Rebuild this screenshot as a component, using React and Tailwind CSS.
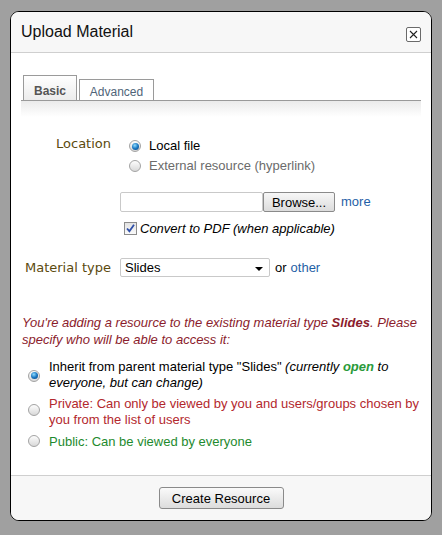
import React from 'react';

const SANS = { fontFamily: '"Liberation Sans", Arial, sans-serif' };
const LABEL = { fontFamily: '"DejaVu Sans", Verdana, sans-serif' };

function Radio({ checked }) {
  return (
    <span className="relative inline-flex w-[12px] h-[12px] shrink-0 items-center justify-center rounded-full border border-[#a3a3a3] bg-gradient-to-b from-[#fdfdfd] to-[#d9d9d9]">
      {checked && (
        <span className="w-[7px] h-[7px] rounded-full bg-[radial-gradient(circle_at_40%_35%,#8fdcff,#1a78c2_50%,#0b3f78)]" />
      )}
    </span>
  );
}

function Checkbox() {
  return (
    <span className="inline-flex w-[13px] h-[13px] shrink-0 items-center justify-center border border-[#8c8c8c] bg-gradient-to-b from-[#e2e2e2] to-[#fafafa]">
      <svg width="9" height="9" viewBox="0 0 9 9">
        <path d="M1 4.5 L3.4 7.2 L8 0.8" fill="none" stroke="#2f4fa8" strokeWidth="1.8" />
      </svg>
    </span>
  );
}

export default function App() {
  return (
    <div className="w-[442px] h-[535px] bg-[#a0a0a0] pt-[11px] pl-[10px]" style={SANS}>
      <div className="w-[422px] h-[510px] border border-black rounded-[9px] overflow-hidden bg-white flex flex-col text-[13px] text-black">
        {/* header */}
        <div className="h-[41px] shrink-0 bg-[#f7f7f7] border-b border-[#cfcfcf] flex items-center justify-between pl-[10px] pr-[10px]">
          <span className="text-[16px] text-[#111] leading-none">Upload Material</span>
          <span className="mt-[4px] w-[15px] h-[15px] border border-[#6a6a6a] rounded-[2px] bg-white flex items-center justify-center">
            <svg width="9" height="9" viewBox="0 0 9 9">
              <path d="M1 1 L8 8 M8 1 L1 8" stroke="#222" strokeWidth="1.1" />
            </svg>
          </span>
        </div>

        {/* body */}
        <div className="flex-1 px-[10px]">
          <div className="mt-[23px] h-[25px] flex items-end border-b border-[#9a9a9a] text-[12px]">
            <div className="ml-[2px] w-[54px] h-[25px] border border-b-0 border-[#9a9a9a] bg-gradient-to-b from-white to-[#ececec] flex items-center justify-center pt-[6px] font-bold text-[#555]">
              Basic
            </div>
            <div className="ml-[2px] w-[75px] h-[21px] border border-b-0 border-[#9a9a9a] bg-white flex items-center justify-center pt-[3px] text-[#4f6478]">
              Advanced
            </div>
          </div>
          <div className="h-[16px] bg-gradient-to-b from-[#ebebeb] to-white" />

          {/* location */}
          <div className="mt-[19px] flex">
            <div className="w-[90px] text-right leading-[16px] text-[#5b4a0e]" style={LABEL}>Location</div>
            <div className="ml-[10px] pl-[8px] flex flex-col">
              <label className="h-[20px] flex items-center gap-[8px]">
                <Radio checked />
                <span>Local file</span>
              </label>
              <label className="h-[20px] flex items-center gap-[8px] text-[#6b6b6b]">
                <Radio />
                <span>External resource (hyperlink)</span>
              </label>
            </div>
          </div>

          <div className="mt-[16px] ml-[99px] flex items-center h-[20px]">
            <span className="w-[143px] h-[20px] border border-[#c9c9c9] rounded-[2px] bg-white" />
            <button className="w-[72px] h-[20px] border border-[#8a8a8a] rounded-[2px] bg-gradient-to-b from-[#f7f7f7] to-[#dcdcdc] text-[13px] leading-none">
              Browse...
            </button>
            <a className="ml-[6px] text-[#1f5fa6]">more</a>
          </div>

          <div className="mt-[9px] ml-[103px] h-[15px] flex items-center gap-[3px]">
            <Checkbox />
            <span className="italic">Convert to PDF (when applicable)</span>
          </div>

          {/* material type */}
          <div className="mt-[22px] flex items-center h-[19px]">
            <div className="w-[90px] text-right text-[#5b4a0e]" style={LABEL}>Material type</div>
            <div className="ml-[9px] relative w-[150px] h-[19px] border border-[#c9c9c9] rounded-[2px] bg-white flex items-center pl-[4px]">
              <span>Slides</span>
              <span className="absolute right-[6px] top-[8px] w-0 h-0 border-l-[4px] border-r-[4px] border-t-[4px] border-l-transparent border-r-transparent border-t-black" />
            </div>
            <span className="ml-[5px]">or</span>
            <a className="ml-[4px] text-[#1f5fa6]">other</a>
          </div>

          {/* notice */}
          <p className="mt-[37px] pl-[1px] italic leading-[17px] text-[#8b1c2c]">
            You're adding a resource to the existing material type <b>Slides</b>. Please<br />
            specify who will be able to access it:
          </p>

          <div className="mt-[11px] flex flex-col">
            <label className="flex items-center">
              <span className="ml-[7px]"><Radio checked /></span>
              <span className="ml-[9px] leading-[16px] whitespace-nowrap">
                Inherit from parent material type "Slides" <i>(currently <b className="text-[#2a9a3a]">open</b> to</i>
                <br />
                <i>everyone, but can change)</i>
              </span>
            </label>
            <label className="mt-[5px] flex items-center text-[#b3282d]">
              <span className="ml-[7px]"><Radio /></span>
              <span className="ml-[9px] leading-[16px] whitespace-nowrap">
                Private: Can only be viewed by you and users/groups chosen by
                <br />
                you from the list of users
              </span>
            </label>
            <label className="mt-[3px] flex items-center text-[#1e8a2e]">
              <span className="ml-[7px] mt-[2px]"><Radio /></span>
              <span className="ml-[9px] leading-[16px]">Public: Can be viewed by everyone</span>
            </label>
          </div>
        </div>

        {/* footer */}
        <div className="h-[45px] shrink-0 bg-[#f7f7f7] border-t border-[#cfcfcf] flex items-center justify-center">
          <button className="w-[125px] h-[22px] border border-[#8a8a8a] rounded-[3px] bg-gradient-to-b from-[#fafafa] to-[#dcdcdc] text-[13px] leading-none">
            Create Resource
          </button>
        </div>
      </div>
    </div>
  );
}
